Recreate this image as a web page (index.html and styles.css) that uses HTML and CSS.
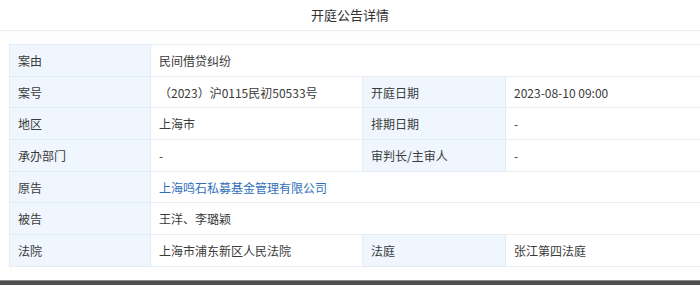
FILE: index.html
```html
<!DOCTYPE html>
<html>
<head>
    <meta charset="utf-8">
    <title>开庭公告详情</title>
    <link rel="stylesheet" href="styles.css">
</head>
<body>

<div class="detail">
    <div class="detail-title">开庭公告详情</div>
    <table class="detail-table">
        <colgroup>
            <col class="col-label">
            <col class="col-value">
            <col class="col-label2">
            <col>
        </colgroup>
        <tr>
            <td class="label">案由</td>
            <td colspan="3">民间借贷纠纷</td>
        </tr>
        <tr>
            <td class="label">案号</td>
            <td>（2023）沪0115民初50533号</td>
            <td class="label">开庭日期</td>
            <td>2023-08-10 09:00</td>
        </tr>
        <tr>
            <td class="label">地区</td>
            <td>上海市</td>
            <td class="label">排期日期</td>
            <td>-</td>
        </tr>
        <tr>
            <td class="label">承办部门</td>
            <td>-</td>
            <td class="label">审判长/主审人</td>
            <td>-</td>
        </tr>
        <tr>
            <td class="label">原告</td>
            <td colspan="3"><a href="#">上海鸣石私募基金管理有限公司</a></td>
        </tr>
        <tr>
            <td class="label">被告</td>
            <td colspan="3">王洋、李璐颖</td>
        </tr>
        <tr>
            <td class="label">法院</td>
            <td>上海市浦东新区人民法院</td>
            <td class="label">法庭</td>
            <td>张江第四法庭</td>
        </tr>
    </table>
</div>

<div class="page-bottom"></div>

</body>
</html>
```

FILE: styles.css
```css
html, body {
    margin: 0;
    height: 100%;
    overflow: hidden;
}
body {
    font-family: "Noto Sans CJK SC", "Liberation Sans", sans-serif;
    font-size: 12px;
    color: #3a3a3a;
    background-color: #fff;
    display: flex;
    flex-direction: column;
}
.detail {
    flex: 1;
}
.detail-title {
    height: 30px;
    line-height: 30px;
    text-align: center;
    font-size: 13px;
    color: #333;
    border-bottom: 1px solid #eeeeee;
    box-shadow: 0 1px 2px rgba(0, 0, 0, 0.03);
}
.detail-table {
    margin: 13px 0 0 9px;
    width: 691px;
    border-collapse: collapse;
    table-layout: fixed;
}
.col-label {
    width: 141px;
}
.col-value {
    width: 212px;
}
.col-label2 {
    width: 143px;
}
.detail-table td {
    height: 31.7px;
    padding: 0 8px;
    border: 1px solid #e9edf1;
    white-space: nowrap;
    box-sizing: border-box;
}
.detail-table td:last-child {
    border-right: none;
}
.detail-table td.label {
    background-color: #eff6fd;
    border-color: #e3ebf3;
}
.detail-table a {
    color: #2f6fba;
    text-decoration: none;
}
.page-bottom {
    height: 4px;
    background-color: #4d4d4d;
    border-top: 1px solid #8a8a8a;
}
```
